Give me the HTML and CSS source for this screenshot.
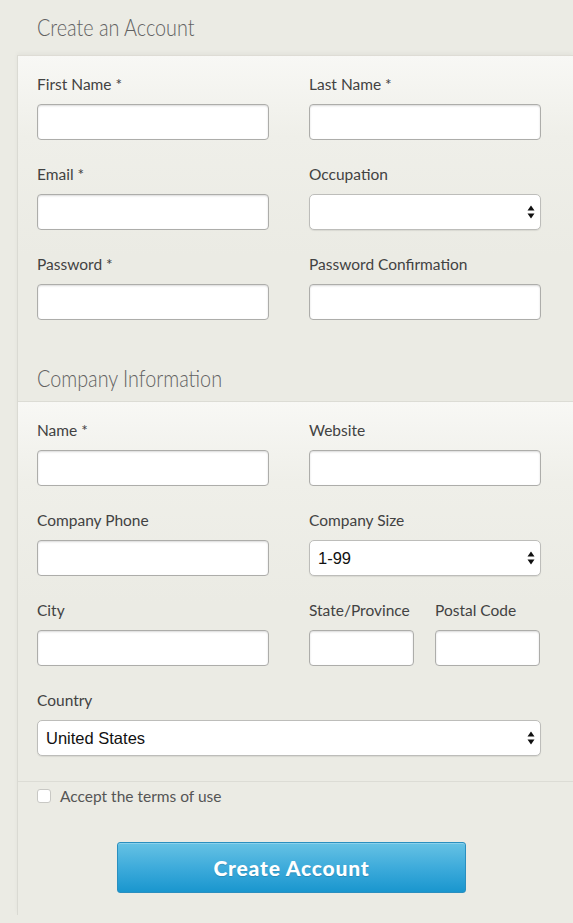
FILE: index.html
```html
<!DOCTYPE html>
<html>
<head>
<meta charset="utf-8">
<link rel="stylesheet" href="styles.css">
</head>
<body>
<h1 class="page-title"><span class="narrow">Create an Account</span></h1>
<form class="panel">
  <section class="fields">
    <div class="grid">
      <div class="field"><label>First Name *</label><input class="input" type="text"></div>
      <div class="field"><label>Last Name *</label><input class="input" type="text"></div>
      <div class="field"><label>Email *</label><input class="input" type="text"></div>
      <div class="field"><label>Occupation</label>
        <div class="select-wrap"><select class="input select"><option></option></select>
          <svg class="arrows" width="8" height="14" viewBox="0 0 8 14"><path d="M4 0.5L7.5 5.5H0.5Z M4 13.5L7.5 8.5H0.5Z" fill="#111"/></svg>
        </div>
      </div>
      <div class="field"><label>Password *</label><input class="input" type="password"></div>
      <div class="field"><label>Password Confirmation</label><input class="input" type="password"></div>
    </div>
  </section>
  <h2 class="section-title"><span class="narrow">Company Information</span></h2>
  <section class="fields bordered">
    <div class="grid">
      <div class="field"><label>Name *</label><input class="input" type="text"></div>
      <div class="field"><label>Website</label><input class="input" type="text"></div>
      <div class="field"><label>Company Phone</label><input class="input" type="text"></div>
      <div class="field"><label>Company Size</label>
        <div class="select-wrap"><select class="input select"><option>1-99</option></select>
          <svg class="arrows" width="8" height="14" viewBox="0 0 8 14"><path d="M4 0.5L7.5 5.5H0.5Z M4 13.5L7.5 8.5H0.5Z" fill="#111"/></svg>
        </div>
      </div>
      <div class="field"><label>City</label><input class="input" type="text"></div>
      <div class="pair">
        <div class="field"><label>State/Province</label><input class="input" type="text"></div>
        <div class="field"><label>Postal Code</label><input class="input" type="text"></div>
      </div>
      <div class="field wide"><label>Country</label>
        <div class="select-wrap"><select class="input select"><option>United States</option></select>
          <svg class="arrows" width="8" height="14" viewBox="0 0 8 14"><path d="M4 0.5L7.5 5.5H0.5Z M4 13.5L7.5 8.5H0.5Z" fill="#111"/></svg>
        </div>
      </div>
    </div>
  </section>
  <section class="terms">
    <label class="check"><span class="box"></span>Accept the terms of use</label>
    <button class="submit" type="button">Create Account</button>
  </section>
</form>
</body>
</html>
```
FILE: styles.css
```css
* { box-sizing: border-box; }
html, body { margin: 0; padding: 0; }
body {
  background: #ebebe4;
  font-family: "Lato", "Open Sans", sans-serif;
  color: #444;
  width: 573px;
  overflow: hidden;
}
.narrow {
  display: inline-block;
  transform: scaleX(0.86);
  transform-origin: left center;
  white-space: nowrap;
}
.page-title {
  margin: 0;
  height: 55px;
  line-height: 54px;
  padding-left: 37px;
  font-size: 23px;
  font-weight: 300;
  color: #626262;
}
.panel {
  margin: 0 0 0 17px;
  border-left: 1px solid #dadad3;
  border-top: 1px solid #dedcd5;
  box-shadow: 0 -2px 4px rgba(0,0,0,0.04);
  padding-bottom: 22px;
}
.fields {
  padding: 18px 32px 24px 19px;
  background: linear-gradient(to bottom, #f8f8f5 0px, #efefe9 80px, #ebebe4 200px);
}
.fields.bordered {
  border-top: 1px solid #dcdcd5;
  padding-bottom: 25px;
}
.grid {
  display: grid;
  grid-template-columns: 232px 232px;
  column-gap: 40px;
  row-gap: 24px;
}
.wide { grid-column: 1 / 3; }
.pair {
  display: grid;
  grid-template-columns: 105px 105px;
  column-gap: 21px;
}
.field { display: flex; flex-direction: column; gap: 10px; }
.field label {
  font-size: 15.5px;
  line-height: 20px;
  color: #424242;
  white-space: nowrap;
}
.input {
  display: block;
  width: 100%;
  height: 36px;
  margin: 0;
  background: #fff;
  border: 1px solid #adadaa;
  border-radius: 4px;
  box-shadow: inset 0 1px 2px rgba(0,0,0,0.15);
  font-family: "Liberation Sans", Arial, sans-serif;
  font-size: 16.5px;
  color: #111;
  padding: 0 8px;
  outline: none;
}
.select-wrap { position: relative; }
.select {
  appearance: none;
  -webkit-appearance: none;
  border-radius: 5px;
  box-shadow: 0 1px 1px rgba(0,0,0,0.08);
  border-color: #bdbdba;
}
.arrows {
  position: absolute;
  right: 6px;
  top: 11px;
  pointer-events: none;
}
.section-title {
  margin: 0;
  padding: 19px 0 8px 19px;
  line-height: 30px;
  font-size: 23px;
  font-weight: 300;
  color: #626262;
}
.terms {
  border-top: 1px solid #dcdcd5;
  padding: 4px 32px 0 19px;
}
.check {
  display: flex;
  align-items: center;
  height: 20px;
  font-size: 15.5px;
  color: #555;
}
.box {
  width: 14px;
  height: 14px;
  background: #fff;
  border: 1px solid #c8c8c4;
  border-radius: 3px;
  margin-right: 9px;
  flex: none;
}
.submit {
  display: block;
  margin: 36px 0 0 80px;
  width: 349px;
  height: 51px;
  border: 1px solid #2a8fbf;
  border-radius: 3px;
  background: linear-gradient(to bottom, #66c2e4 0%, #3aa9da 55%, #1996ce 100%);
  color: #fff;
  font-family: "Lato", sans-serif;
  font-weight: 900;
  font-size: 21px;
  letter-spacing: 0.8px;
  text-shadow: 0 1px 1px rgba(0,0,0,0.15);
  box-shadow: inset 0 1px 0 rgba(255,255,255,0.25);
}
```
